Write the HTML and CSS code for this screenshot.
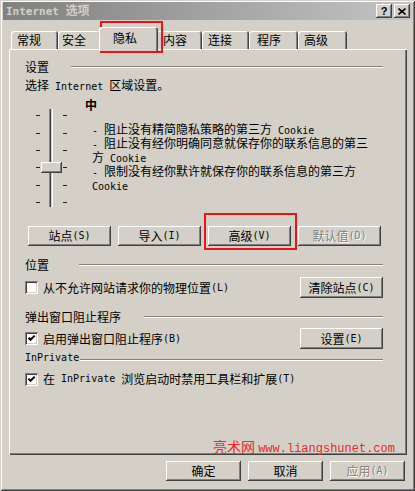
FILE: index.html
```html
<!DOCTYPE html>
<html>
<head>
<meta charset="utf-8">
<title>Internet 选项</title>
<link rel="stylesheet" href="styles.css">
</head>
<body>
<div class="window">

  <div class="titlebar">
    <div class="title"><span class="lat">Internet </span>选项</div>
    <div class="cap-btn help">?</div>
    <div class="cap-btn close">
      <svg width="8" height="7" viewBox="0 0 8 7"><path d="M0.5 0.5 L7.5 6.5 M7.5 0.5 L0.5 6.5" stroke="#000" stroke-width="1.6"/></svg>
    </div>
  </div>

  <div class="tabs">
    <div class="tab tab-general">常规</div>
    <div class="tab tab-security">安全</div>
    <div class="tab tab-privacy active">隐私</div>
    <div class="tab tab-content">内容</div>
    <div class="tab tab-connect">连接</div>
    <div class="tab tab-programs">程序</div>
    <div class="tab tab-advanced">高级</div>
  </div>

  <div class="panel">
    <div class="group-head"><span>设置</span><div class="rule rule-settings"></div></div>
    <div class="zone">选择<span class="lat"> Internet </span>区域设置。</div>

    <div class="slider-block">
      <svg class="slider" width="40" height="116" viewBox="0 0 40 116" shape-rendering="crispEdges">
        <g fill="#202020">
          <rect x="6" y="17" width="4" height="1"/><rect x="33" y="17" width="4" height="1"/>
          <rect x="6" y="35" width="4" height="1"/><rect x="33" y="35" width="4" height="1"/>
          <rect x="6" y="52" width="4" height="1"/><rect x="33" y="52" width="4" height="1"/>
          <rect x="6" y="69" width="4" height="1"/><rect x="33" y="69" width="4" height="1"/>
          <rect x="6" y="87" width="4" height="1"/><rect x="33" y="87" width="4" height="1"/>
          <rect x="6" y="104" width="4" height="1"/><rect x="33" y="104" width="4" height="1"/>
        </g>
        <rect x="19" y="11" width="1" height="98" fill="#808080"/>
        <rect x="20" y="11" width="1" height="98" fill="#404040"/>
        <rect x="21" y="11" width="1" height="98" fill="#d4d0c8"/>
        <rect x="22" y="11" width="1" height="98" fill="#fff"/>
        <rect x="11" y="64" width="21" height="11" fill="#404040"/>
        <rect x="11" y="64" width="20" height="10" fill="#fff"/>
        <rect x="12" y="65" width="19" height="9" fill="#808080"/>
        <rect x="12" y="65" width="18" height="8" fill="#d4d0c8"/>
      </svg>
      <div class="level">
        <div class="level-name">中</div>
        <div class="level-desc">
          <div><span class="lat">- </span>阻止没有精简隐私策略的第三方<span class="lat"> Cookie</span></div>
          <div><span class="lat">- </span>阻止没有经你明确同意就保存你的联系信息的第三</div>
          <div>方<span class="lat"> Cookie</span></div>
          <div><span class="lat">- </span>限制没有经你默许就保存你的联系信息的第三方</div>
          <div><span class="lat">Cookie</span></div>
        </div>
      </div>
    </div>

    <div class="btn-row">
      <div class="btn">站点<span class="lat">(S)</span></div>
      <div class="btn">导入<span class="lat">(I)</span></div>
      <div class="btn">高级<span class="lat">(V)</span></div>
      <div class="btn disabled">默认值<span class="lat">(D)</span></div>
    </div>

    <div class="group-head"><span>位置</span><div class="rule rule-location"></div></div>
    <div class="opt-row">
      <div class="check-line"><span class="checkbox"></span>从不允许网站请求你的物理位置<span class="lat">(L)</span></div>
      <div class="btn side-btn">清除站点<span class="lat">(C)</span></div>
    </div>

    <div class="group-head"><span>弹出窗口阻止程序</span><div class="rule rule-popup"></div></div>
    <div class="opt-row second">
      <div class="check-line"><span class="checkbox"><svg width="13" height="13" viewBox="0 0 13 13"><path d="M3.5 5.8 L5.5 7.8 L9.7 3.6" fill="none" stroke="#000" stroke-width="2"/></svg></span>启用弹出窗口阻止程序<span class="lat">(B)</span></div>
      <div class="btn side-btn">设置<span class="lat">(E)</span></div>
    </div>

    <div class="group-head last"><span class="lat">InPrivate</span><div class="rule rule-inprivate"></div></div>
    <div class="opt-row short">
      <div class="check-line"><span class="checkbox"><svg width="13" height="13" viewBox="0 0 13 13"><path d="M3.5 5.8 L5.5 7.8 L9.7 3.6" fill="none" stroke="#000" stroke-width="2"/></svg></span>在<span class="lat"> InPrivate </span>浏览启动时禁用工具栏和扩展<span class="lat">(T)</span></div>
    </div>
  </div>

  <div class="footer">
    <div class="btn foot-btn">确定</div>
    <div class="btn foot-btn">取消</div>
    <div class="btn foot-btn disabled">应用<span class="lat">(A)</span></div>
  </div>

  <div class="mark mark-tab"></div>
  <div class="mark mark-adv"></div>
  <div class="watermark">亮术网 <span class="url">www.liangshunet.com</span></div>
</div>
</body>
</html>
```

FILE: styles.css
```css
body {
  margin: 0;
  background: #d4d0c8;
  font: 12px/14px "Noto Sans CJK SC", sans-serif;
  color: #000;
}

.lat {
  font-family: "DejaVu Sans Mono", monospace;
  font-size: 10px;
  white-space: pre;
}

.window {
  position: relative;
  width: 415px;
  height: 491px;
  box-sizing: border-box;
  padding-top: 2px;
  background: #d4d0c8;
  box-shadow: inset 1px 1px #d4d0c8, inset -1px -1px #404040,
              inset 2px 2px #fff, inset -2px -2px #808080;
}

.titlebar {
  display: flex;
  align-items: center;
  height: 18px;
  margin: 0 3px;
  padding-left: 3px;
  background: linear-gradient(to right, #808080, #c4c4c4);
}

.title {
  flex: 1;
  font-weight: bold;
  color: #d4d0c8;
}

.title .lat {
  font-size: 11px;
  font-weight: bold;
}

.cap-btn {
  width: 16px;
  height: 14px;
  box-sizing: border-box;
  display: flex;
  align-items: center;
  justify-content: center;
  background: #d4d0c8;
  font: bold 11px/14px "Liberation Sans", sans-serif;
  box-shadow: inset -1px -1px #404040, inset 1px 1px #fff, inset -2px -2px #808080;
}

.help {
  margin-right: 2px;
}

.close {
  margin-right: 2px;
}

.tabs {
  display: flex;
  align-items: flex-end;
  height: 29px;
  padding-left: 11px;
}

.tab {
  height: 18px;
  box-sizing: border-box;
  padding-left: 6px;
  line-height: 18px;
  border-radius: 3px 3px 0 0;
  box-shadow: inset 1px 1px #fff, inset -1px 0 #404040, inset -2px 0 #808080;
}

.tab-general { width: 47px; }
.tab-security { width: 43px; padding-left: 4px; }
.tab-content { width: 46px; padding-left: 7px; }
.tab-connect { width: 47px; }
.tab-programs { width: 49px; padding-left: 8px; }
.tab-advanced { width: 49px; }

.tab.active {
  position: relative;
  z-index: 1;
  width: 59px;
  height: 24px;
  margin: 0 -2px -2px;
  padding-left: 14px;
  line-height: 22px;
  background: #d4d0c8;
}

.panel {
  margin-left: 9px;
  width: 398px;
  height: 406px;
  box-sizing: border-box;
  padding: 11px 24px 0 16px;
  box-shadow: inset 1px 1px #fff, inset -1px -1px #404040, inset -2px -2px #808080;
}

.group-head {
  display: flex;
  align-items: center;
  height: 14px;
  margin-top: 12px;
}

.group-head:first-child {
  margin-top: 0;
}

.group-head.last {
  margin-top: 2px;
}

.rule {
  flex: 1;
  height: 0;
  border-top: 1px solid #808080;
  border-bottom: 1px solid #fff;
}

.rule-settings { margin-left: 22px; }
.rule-location { margin-left: 30px; }
.rule-popup { margin-left: 23px; }
.rule-inprivate { margin-left: 1px; margin-top: 4px; }

.zone {
  margin-top: 4px;
}

.slider-block {
  display: flex;
  height: 120px;
  margin-top: 4px;
}

.slider {
  margin-left: 5px;
}

.level {
  margin-left: 15px;
}

.level-name {
  font-weight: bold;
}

.level-desc {
  margin-top: 11px;
  padding-left: 7px;
  line-height: 12px;
}

.btn-row {
  display: flex;
  gap: 7px;
  margin-top: 8px;
  padding-left: 3px;
}

.btn {
  display: flex;
  align-items: center;
  justify-content: center;
  width: 83px;
  height: 20px;
  box-sizing: border-box;
  background: #d4d0c8;
  box-shadow: inset -1px -1px #404040, inset 1px 1px #fff,
              inset -2px -2px #808080, inset 2px 2px #d4d0c8;
}

.btn.disabled {
  color: #808080;
  text-shadow: 1px 1px #fff;
}

.opt-row {
  display: flex;
  align-items: center;
  justify-content: space-between;
  height: 21px;
  margin-top: 5px;
}

.opt-row.second {
  margin-top: 4px;
}

.opt-row.short {
  height: 16px;
  margin-top: 6px;
}

.side-btn {
  height: 21px;
}

.check-line {
  display: flex;
  align-items: center;
}

.checkbox {
  display: inline-block;
  width: 13px;
  height: 13px;
  margin-right: 5px;
  background: #fff;
  box-shadow: inset 1px 1px #808080, inset -1px -1px #fff,
              inset 2px 2px #404040, inset -2px -2px #d4d0c8;
}

.checkbox svg {
  display: block;
}

.footer {
  display: flex;
  justify-content: flex-end;
  gap: 7px;
  margin-top: 6px;
  padding-right: 10px;
}

.foot-btn {
  width: 75px;
}

.mark {
  position: absolute;
  box-sizing: border-box;
  border: 2px solid #e8141c;
}

.mark-tab {
  left: 100px;
  top: 21px;
  width: 63px;
  height: 32px;
}

.mark-adv {
  left: 204px;
  top: 213px;
  width: 93px;
  height: 37px;
}

.watermark {
  position: absolute;
  left: 213px;
  top: 437px;
  color: #e52a2a;
  font-size: 14px;
  line-height: 18px;
  white-space: nowrap;
}

.watermark .url {
  font: 12px "Liberation Mono", monospace;
}
```
